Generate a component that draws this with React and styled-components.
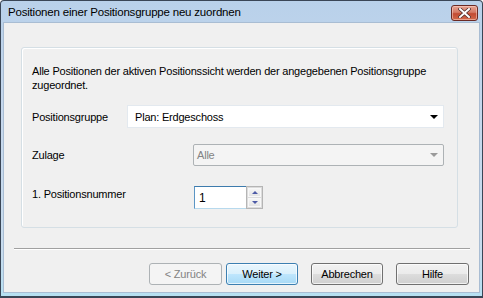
import React from "react";
import styled, { createGlobalStyle } from "styled-components";

const GlobalStyle = createGlobalStyle`
  html, body { margin: 0; padding: 0; background: #ffffff; }
  * { box-sizing: border-box; }
  body { font-family: "Liberation Sans", Arial, sans-serif; }
`;

const Window = styled.div`
  width: 483px;
  height: 298px;
  border: 1px solid #3a4656;
  border-bottom-width: 2px;
  border-radius: 4px 4px 0 0;
  background: linear-gradient(to bottom, #b9d1ea 0%, #c6d8ed 40%, #c8dcee 85%, #b6e0f2 100%);
  display: flex;
  flex-direction: column;
  padding: 0 2px 3px 2px;
  font-family: "Liberation Sans", Arial, sans-serif;
  font-size: 11px;
  letter-spacing: -0.2px;
  color: #000;
`;

const TitleBar = styled.div`
  height: 21px;
  flex: none;
  display: flex;
  align-items: center;
  justify-content: space-between;
  padding: 0 2px 0 5px;
`;

const Title = styled.span`
  font-size: 11.5px;
  color: #000;
  padding-top: 1px;
`;

const CloseButton = styled.div`
  width: 27px;
  height: 16px;
  margin-top: 2px;
  border: 1px solid #6b2a24;
  border-radius: 3px;
  background: linear-gradient(to bottom, #e8a493 0%, #d47a66 45%, #c24a32 55%, #d26a4c 100%);
  box-shadow: inset 0 0 0 1px rgba(255, 220, 210, 0.5);
  display: flex;
  align-items: center;
  justify-content: center;
`;

const Client = styled.div`
  flex: 1;
  background: #f0f0f0;
  border: 1px solid #a9bdd3;
  display: flex;
  flex-direction: column;
`;

const Panel = styled.div`
  margin: 24px 0 0 17px;
  width: 437px;
  height: 181px;
  border: 1px solid #d5dfe5;
  border-radius: 3px;
  box-shadow: inset 1px 1px 0 #ffffff;
  padding: 16px 10px 0 10px;
  display: flex;
  flex-direction: column;
`;

const Intro = styled.p`
  margin: 0;
  line-height: 14px;
`;

const Row = styled.div`
  display: flex;
  align-items: ${(p) => p.$align || "center"};
  margin-top: ${(p) => p.$top}px;
`;

const Label = styled.span`
  flex: none;
  width: ${(p) => p.$width}px;
  padding-top: ${(p) => p.$pad || 0}px;
`;

const Combo = styled.div`
  position: relative;
  width: ${(p) => p.$width}px;
  height: ${(p) => p.$height}px;
  display: flex;
  align-items: center;
  padding-left: ${(p) => (p.$disabled ? 3 : 7)}px;
  background: ${(p) => (p.$disabled ? "#f4f4f4" : "#ffffff")};
  border: 1px solid ${(p) => (p.$disabled ? "#adb2b5" : "#e3e9ef")};
  border-radius: ${(p) => (p.$disabled ? 2 : 0)}px;
  color: ${(p) => (p.$disabled ? "#838383" : "#000000")};
`;

const ComboArrow = styled.span`
  position: absolute;
  right: 5px;
  top: 50%;
  margin-top: -2px;
  width: 0;
  height: 0;
  border-left: 4px solid transparent;
  border-right: 4px solid transparent;
  border-top: 4px solid ${(p) => (p.$disabled ? "#9a9a9a" : "#000000")};
`;

const Spin = styled.div`
  display: flex;
`;

const NumberBox = styled.div`
  width: 52px;
  height: 23px;
  background: #fff;
  border: 1px solid #abadb3;
  border-top-color: #3d7bad;
  border-left-color: #5b95c4;
  border-bottom-color: #b7d9ed;
  border-right: none;
  display: flex;
  align-items: center;
  padding-left: 4px;
  font-size: 12px;
`;

const SpinButtons = styled.div`
  width: 17px;
  height: 23px;
  border: 1px solid #b5b5b5;
  background: #dcdcdc;
  display: flex;
  flex-direction: column;
  gap: 1px;
  padding: 1px;
`;

const SpinButton = styled.div`
  flex: 1;
  background: linear-gradient(to bottom, #f5f5f5, #e4e4e4);
  border: 1px solid #f8f8f8;
  display: flex;
  align-items: center;
  justify-content: center;
`;

const Tri = styled.span`
  width: 0;
  height: 0;
  border-left: 3px solid transparent;
  border-right: 3px solid transparent;
  ${(p) => (p.$up ? "border-bottom: 3px solid #4d5aa6;" : "border-top: 3px solid #4d5aa6;")}
`;

const Separator = styled.div`
  margin: 20px 0 0 10px;
  width: 456px;
  height: 2px;
  border-top: 1px solid #a0a0a0;
  border-bottom: 1px solid #ffffff;
`;

const ButtonBar = styled.div`
  display: flex;
  justify-content: flex-end;
  padding-right: 10px;
  margin-top: 13px;
`;

const Button = styled.div`
  width: ${(p) => p.$width || 72}px;
  height: 22px;
  margin-left: ${(p) => p.$gap || 0}px;
  border-radius: 3px;
  display: flex;
  align-items: center;
  justify-content: center;
  border: 1px solid ${(p) => (p.$disabled ? "#adb2b5" : p.$default ? "#3c7fb1" : "#707070")};
  color: ${(p) => (p.$disabled ? "#838383" : "#000")};
  background: ${(p) =>
    p.$disabled
      ? "#f4f4f4"
      : p.$default
      ? "linear-gradient(to bottom, #eaf6fd 0%, #d9f0fc 50%, #bee6fd 51%, #a7d9f5 100%)"
      : "linear-gradient(to bottom, #f2f2f2 0%, #ebebeb 50%, #dddddd 51%, #cfcfcf 100%)"};
  box-shadow: ${(p) => (p.$disabled ? "none" : "inset 0 0 0 1px rgba(255,255,255,0.7)")};
`;

export default function App() {
  return (
    <>
      <GlobalStyle />
      <Window>
        <TitleBar>
          <Title>Positionen einer Positionsgruppe neu zuordnen</Title>
          <CloseButton>
            <svg width="13" height="10" viewBox="0 0 13 10">
              <path d="M2 1 L11 9 M11 1 L2 9" stroke="#4a2a28" strokeWidth="3.4" strokeLinecap="square" />
              <path d="M2 1 L11 9 M11 1 L2 9" stroke="#ffffff" strokeWidth="2" strokeLinecap="square" />
            </svg>
          </CloseButton>
        </TitleBar>
        <Client>
          <Panel>
            <Intro>
              Alle Positionen der aktiven Positionssicht werden der angegebenen Positionsgruppe
              <br />
              zugeordnet.
            </Intro>
            <Row $top={13}>
              <Label $width={95}>Positionsgruppe</Label>
              <Combo $width={317} $height={23}>
                Plan: Erdgeschoss
                <ComboArrow />
              </Combo>
            </Row>
            <Row $top={16}>
              <Label $width={161}>Zulage</Label>
              <Combo $width={251} $height={22} $disabled>
                Alle
                <ComboArrow $disabled />
              </Combo>
            </Row>
            <Row $top={20} $align="flex-start">
              <Label $width={162} $pad={2}>1. Positionsnummer</Label>
              <Spin>
                <NumberBox>1</NumberBox>
                <SpinButtons>
                  <SpinButton><Tri $up /></SpinButton>
                  <SpinButton><Tri /></SpinButton>
                </SpinButtons>
              </Spin>
            </Row>
          </Panel>
          <Separator />
          <ButtonBar>
            <Button $disabled $width={73}>&lt; Zurück</Button>
            <Button $default $gap={4}>Weiter &gt;</Button>
            <Button $gap={13}>Abbrechen</Button>
            <Button $gap={13} $width={73}>Hilfe</Button>
          </ButtonBar>
        </Client>
      </Window>
    </>
  );
}
